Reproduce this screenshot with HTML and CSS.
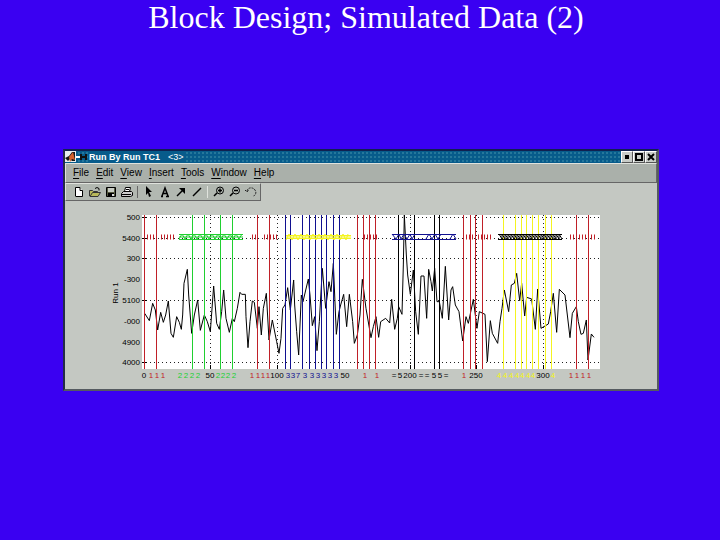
FILE: index.html
```html
<!DOCTYPE html>
<html lang="en">
<head>
<meta charset="utf-8">
<title>Block Design; Simulated Data (2)</title>
<link rel="stylesheet" href="styles.css">
</head>
<body>
<h1 class="heading">Block Design; Simulated Data (2)</h1>
<main class="window">
  <header class="titlebar">
    <svg class="logo" viewBox="0 0 24 12" width="24" height="12" aria-hidden="true">
      <path fill="#e8eeee" d="M0 0h11v11H0z"/><path fill="#151515" d="M0 7l4-2 3-4h3v9H7L5 8l-2 2z"/><path fill="#d4602c" d="M4 6l4-5 2 8-3-1-2 3z"/>
      <path fill="#fff" d="M11 5h5v2h-5z"/><path stroke="#111" stroke-width="2" fill="none" d="M16 3v6M16 6h5M21 3v6"/>
    </svg>
    <span class="caption">Run By Run TC1</span><span class="number">&lt;3&gt;</span>
    <span class="controls">
      <button class="control" aria-label="Minimize"><svg viewBox="0 0 10 10" width="10" height="10"><path d="M3 3h4v4H3z"/></svg></button>
      <button class="control" aria-label="Maximize"><svg viewBox="0 0 10 10" width="10" height="10"><path fill="none" stroke="#000" stroke-width="2" d="M2 2h6v6H2z"/></svg></button>
      <button class="control" aria-label="Close"><svg viewBox="0 0 10 10" width="10" height="10"><path fill="none" stroke="#000" stroke-width="2" d="M2 2l6 6M8 2L2 8"/></svg></button>
    </span>
  </header>
  <nav class="menubar">
    <button class="menu"><u>F</u>ile</button>
    <button class="menu"><u>E</u>dit</button>
    <button class="menu"><u>V</u>iew</button>
    <button class="menu"><u>I</u>nsert</button>
    <button class="menu"><u>T</u>ools</button>
    <button class="menu"><u>W</u>indow</button>
    <button class="menu"><u>H</u>elp</button>
  </nav>
  <div class="toolbar">
    <button class="tool" aria-label="New"><svg viewBox="0 0 12 12" width="12" height="12"><path fill="#fff" d="M3 2h4l2 2v6H3z"/><path fill="none" stroke="#000" d="M2.500 10V1.500H7M7 1.500v3h2.500V10.500h-7"/></svg></button>
    <button class="tool" aria-label="Open"><svg viewBox="0 0 12 12" width="12" height="12"><path fill="#b8b85a" stroke="#333" d="M.5 10V4.500h3l1 1h4v1h3L9 10.500H1L3.500 6.500H9"/><path fill="none" stroke="#000" d="M6 2.500l2-1 2 1v2"/></svg></button>
    <button class="tool" aria-label="Save"><svg viewBox="0 0 12 12" width="12" height="12"><path fill="#555a40" stroke="#000" d="M1.500 1.500h9v9h-9z"/><path fill="#c8ccc4" d="M3 2h6v4H3z"/><path d="M3 7h6v4H3z"/><path fill="#ddd" d="M7 8h2v2H7z"/></svg></button>
    <button class="tool" aria-label="Print"><svg viewBox="0 0 12 12" width="12" height="12"><path fill="#fff" stroke="#000" d="M3.500 5.500l1-4h5l-1 4"/><path fill="#ccc" stroke="#000" d="M.5 7.500l2-2h8l1 1v3l-2 1h-9z"/><path stroke="#000" d="M1 8.500h9M5 3.500h3"/></svg></button>
    <span class="divider"></span>
    <button class="tool" aria-label="Select"><svg viewBox="0 0 12 12" width="12" height="12"><path d="M3 0l6 6H6l2 4-2 1-1-4-2 2z"/></svg></button>
    <button class="tool" aria-label="Add text"><svg viewBox="0 0 12 12" width="12" height="12"><path fill="none" stroke="#000" stroke-width="1.500" d="M2 10.500h2M7 10.500h3M3 10L6 2l3 8M4 7.500h4"/></svg></button>
    <button class="tool" aria-label="Add arrow"><svg viewBox="0 0 12 12" width="12" height="12"><path fill="none" stroke="#000" stroke-width="1.500" d="M2 10l6-6"/><path d="M4 2h6v6L7 5z"/></svg></button>
    <button class="tool" aria-label="Add line"><svg viewBox="0 0 12 12" width="12" height="12"><path stroke="#000" stroke-width="1.500" d="M2 10l8-8"/></svg></button>
    <span class="divider light"></span>
    <button class="tool" aria-label="Zoom in"><svg viewBox="0 0 12 12" width="12" height="12"><circle cx="7" cy="4.500" r="3.500" fill="none" stroke="#000"/><path stroke="#000" stroke-width="1.500" d="M5 4.500h4M7 2.500v4M4 7l-3 3"/></svg></button>
    <button class="tool" aria-label="Zoom out"><svg viewBox="0 0 12 12" width="12" height="12"><circle cx="7" cy="4.500" r="3.500" fill="none" stroke="#000"/><path stroke="#000" stroke-width="1.500" d="M5 4.500h4M4 7l-3 3"/></svg></button>
    <button class="tool" aria-label="Rotate"><svg viewBox="0 0 12 12" width="12" height="12"><path fill="none" stroke="#222" stroke-dasharray="2 1" d="M2 5c1-4 6-4 8-1s0 6-2 6M0 4l2 2 2-2"/></svg></button>
  </div>
  <svg class="chart" viewBox="65 201 592 188" role="img" aria-label="Run 1 signal by scan">
    <path fill="#fff" d="M142 215h458v154H142z"/>
    <path class="grid" d="M142 217.500h458M142 238.500h458M142 258.500h458M142 300.500h458M142 362.500h458M210.500 215v154M277.500 215v154M410.500 215v154M476.500 215v154M543.500 215v154"/>
    <path class="ticks" d="M142 217.500h5M142 238.500h5M142 258.500h5M142 300.500h5M142 362.500h5M210.500 365v4M277.500 365v4M410.500 365v4M476.500 365v4M543.500 365v4"/>
    <polyline class="signal" transform="translate(100 205) scale(.33333)" points="134,325 148,347 158,295 166,315 173,375 182,322 190,352 197,330 205,288 213,385 220,397 230,335 238,352 244,373 248,330 252,235 262,193 266,270 275,385 283,330 293,285 301,376 313,330 322,350 331,380 341,243 350,355 358,373 365,320 371,255 378,340 388,382 397,340 403,350 412,310 420,262 425,268 436,268 438,335 444,428 450,350 457,288 463,292 472,370 477,305 484,390 490,310 499,265 507,405 517,345 523,375 530,410 537,445 543,400 548,310 555,300 563,248 571,315 581,225 584,300 590,380 596,450 604,270 609,290 625,222 630,270 637,362 644,335 651,437 658,350 667,190 677,310 687,230 693,260 700,175 709,388 717,320 722,300 731,268 740,365 748,268 758,350 763,415 772,390 780,330 787,223 798,310 813,398 820,365 828,335 836,397 842,350 857,340 869,354 875,283 884,373 892,340 896,305 906,328 910,180 913,30 919,150 923,210 931,268 940,195 947,320 955,388 963,213 972,213 980,340 986,193 993,230 997,258 1004,190 1011,290 1018,290 1027,340 1036,184 1046,345 1053,255 1058,245 1066,300 1077,320 1088,408 1098,335 1105,355 1120,283 1131,370 1138,320 1155,328 1162,470 1171,347 1177,385 1193,415 1200,350 1206,310 1213,255 1226,320 1234,240 1243,235 1250,205 1259,287 1265,235 1274,333 1280,277 1295,282 1306,373 1313,252 1323,370 1345,357 1352,320 1360,265 1370,382 1378,253 1395,270 1410,398 1417,325 1429,305 1435,350 1443,388 1450,385 1459,345 1464,465 1474,387 1482,397"/>
    <path class="event red" d="M144.500 215v154M156.500 215v154M257.500 215v154M269.500 215v154M357.500 215v154M363.500 215v154M369.500 215v154M375.500 215v154M463.500 215v154M470.500 215v154M475.500 215v154M482.500 215v154M576.500 215v154M588.500 215v154"/>
    <path class="event green" d="M192.500 215v154M204.500 215v154M220.500 215v154M232.500 215v154"/>
    <path class="event blue" d="M285.500 215v154M290.500 215v154M302.500 215v154M309.500 215v154M315.500 215v154M321.500 215v154M326.500 215v154M333.500 215v154M339.500 215v154"/>
    <path class="event black" d="M398.500 215v154M414.500 215v154M434.500 215v154M439.500 215v154"/>
    <path class="event yellow" d="M503.500 215v154M515.500 215v154M521.500 215v154M526.500 215v154M532.500 215v154M538.500 215v154M545.500 215v154M551.500 215v154"/>
    <path class="marks red" d="M144 237h13M161 237h3M164 237h10M252 237h4M264 237h13M364 237h13M463 237h30M570 237h26"/>
    <path class="rail green" d="M179 234.500h64M179 239.500h64"/><path class="weave green" d="M179 239l3-5 3 5 3-5 3 5 3-5 3 5 3-5 3 5 3-5 3 5 3-5 3 5 3-5 3 5 3-5 3 5 3-5 3 5 3-5 3 5 3-5M179 237h64"/>
    <path class="rail yellow" d="M286 235.500h65M286 238.500h65"/><path class="weave yellow" d="M286 237h65M286 240l3-6 3 6 3-6 3 6 3-6 3 6 3-6 3 6 3-6 3 6 3-6 3 6 3-6 3 6 3-6 3 6 3-6 3 6 3-6 3 6 2-6"/>
    <path class="rail blue" d="M392 234.500h64M392 239.500h64"/><path class="weave blue" d="M392 234l4 5 3-5 2 5 3-5 3 5 3-5 2 5 3-5M426 239l3-5 3 5 3-5 3 5 3-5M450 239l3-5 3 5"/>
    <path class="rail black" d="M498 234.500h64M498 239.500h64"/><path class="weave black" d="M499 234l3 5v-5l3 5v-5l3 5v-5l3 5v-5l3 5v-5l3 5v-5l3 5v-5l3 5v-5l3 5v-5l3 5v-5l3 5v-5l3 5v-5l3 5v-5l3 5v-5l3 5v-5l3 5v-5l3 5v-5l3 5v-5l3 5v-5l3 5v-5l3 5"/>
    <g class="axis y-axis">
      <text x="140" y="220">500</text><text x="140" y="241">5400</text><text x="140" y="261">300</text><text x="140" y="282">-300</text><text x="140" y="303">5100</text><text x="140" y="324">-000</text><text x="140" y="345">4900</text><text x="140" y="365">4000</text>
    </g>
    <text class="axis x-axis" transform="translate(118 293) rotate(-90)">Run 1</text>
    <g class="axis x-axis">
      <text x="144" y="378">0</text><text x="210" y="378">50</text><text x="277" y="378">100</text><text x="345" y="378">50</text><text x="410" y="378">200</text><text x="476" y="378">250</text><text x="543" y="378">300</text>
    </g>
    <g class="codes">
      <text class="red" y="378" x="151 157 163">111</text>
      <text class="green" y="378" x="180 186 192 198">2222</text>
      <text class="green" y="378" x="218 223 228 234">2222</text>
      <text class="red" y="378" x="252 258 263 268">1111</text>
      <text class="blue" y="378" x="288 293 298 305 312 318 324 330 336">337333333</text>
      <text class="red" y="378" x="365 377">11</text>
      <text class="black" y="378" x="394 400">=5</text>
      <text class="black" y="378" x="421 427 434 440 446">==55=</text>
      <text class="red" y="378" x="464">1</text>
      <text class="yellow" y="378" x="499 505 511 517 522 528 533">4444444</text>
      <text class="yellow" y="378" x="553">4</text>
      <text class="red" y="378" x="571 577 583 589">1111</text>
    </g>
  </svg>
</main>
</body>
</html>
```
FILE: styles.css
```css
* {
  box-sizing: border-box;
}

body {
  margin: 0;
  background: #3a00f2;
  font-family: "Liberation Sans", Arial, sans-serif;
}

.heading {
  margin: 0;
  height: 149px;
  padding-left: 12px;
  color: #fff;
  font: 32px/34px "Liberation Serif", "Times New Roman", serif;
  text-align: center;
}

.window {
  margin: 0 61px 0 63px;
  border: 2px solid #555b60;
  border-top-color: #102050;
  border-left-color: #252b48;
  background: #c4c8c2;
}

.titlebar {
  display: flex;
  align-items: center;
  height: 12px;
  color: #fff;
  font-size: 9px;
  line-height: 12px;
  background-color: #075b8b;
  background-image: radial-gradient(#25779b 1px, transparent 1px);
  background-size: 4px 4px;
}

.logo {
  flex: none;
}

.caption {
  padding-right: 8px;
  background: #075b8b;
  font-weight: bold;
}

.number {
  background: #075b8b;
}

.controls {
  display: flex;
  margin-left: auto;
}

.control {
  display: grid;
  place-items: center;
  width: 12px;
  height: 12px;
  padding: 0;
  border: 1px solid #fff;
  border-right-color: #555;
  border-bottom-color: #555;
  background: #c8ccc8;
}

.menubar {
  display: flex;
  gap: 7px;
  height: 20px;
  padding-left: 7px;
  border: 1px solid #e0e3dd;
  border-right-color: #666;
  border-bottom-color: #666;
  background: #aab0aa;
}

.menu {
  padding: 0;
  border: 0;
  background: none;
  font: 10px/18px "Liberation Sans", Arial, sans-serif;
  color: #000;
}

.menu u {
  text-underline-offset: 2px;
}

.toolbar {
  display: flex;
  align-items: center;
  gap: 4px;
  width: max-content;
  height: 18px;
  padding: 0 3px 0 7px;
  border: 1px solid #e0e3dd;
  border-right-color: #666;
  border-bottom-color: #666;
  background: #b2b8b1;
}

.tool {
  display: grid;
  width: 12px;
  padding: 0;
  border: 0;
  background: none;
}

.divider {
  width: 2px;
  height: 12px;
  border-left: 1px solid #666;
}

.light {
  border-left-color: #e0e3dd;
}

.chart {
  display: block;
  width: 100%;
  height: auto;
}

.grid {
  fill: none;
  stroke: #222;
  stroke-dasharray: 1 3;
}

.ticks {
  stroke: #000;
}

.signal {
  fill: none;
  stroke: #000;
  stroke-width: 3;
}

.red { --ink: #c02028; }
.green { --ink: #20d030; }
.blue { --ink: #101090; }
.black { --ink: #000; }
.yellow { --ink: #f4f420; }

.event,
.rail,
.weave,
.marks {
  fill: none;
  stroke: var(--ink);
}

.marks {
  stroke-width: 5;
  stroke-dasharray: 1 2;
}

.axis {
  font-size: 8px;
}

.y-axis {
  text-anchor: end;
}

.x-axis {
  text-anchor: middle;
}

.codes text {
  fill: var(--ink);
  font-size: 8px;
  text-anchor: middle;
}
```
